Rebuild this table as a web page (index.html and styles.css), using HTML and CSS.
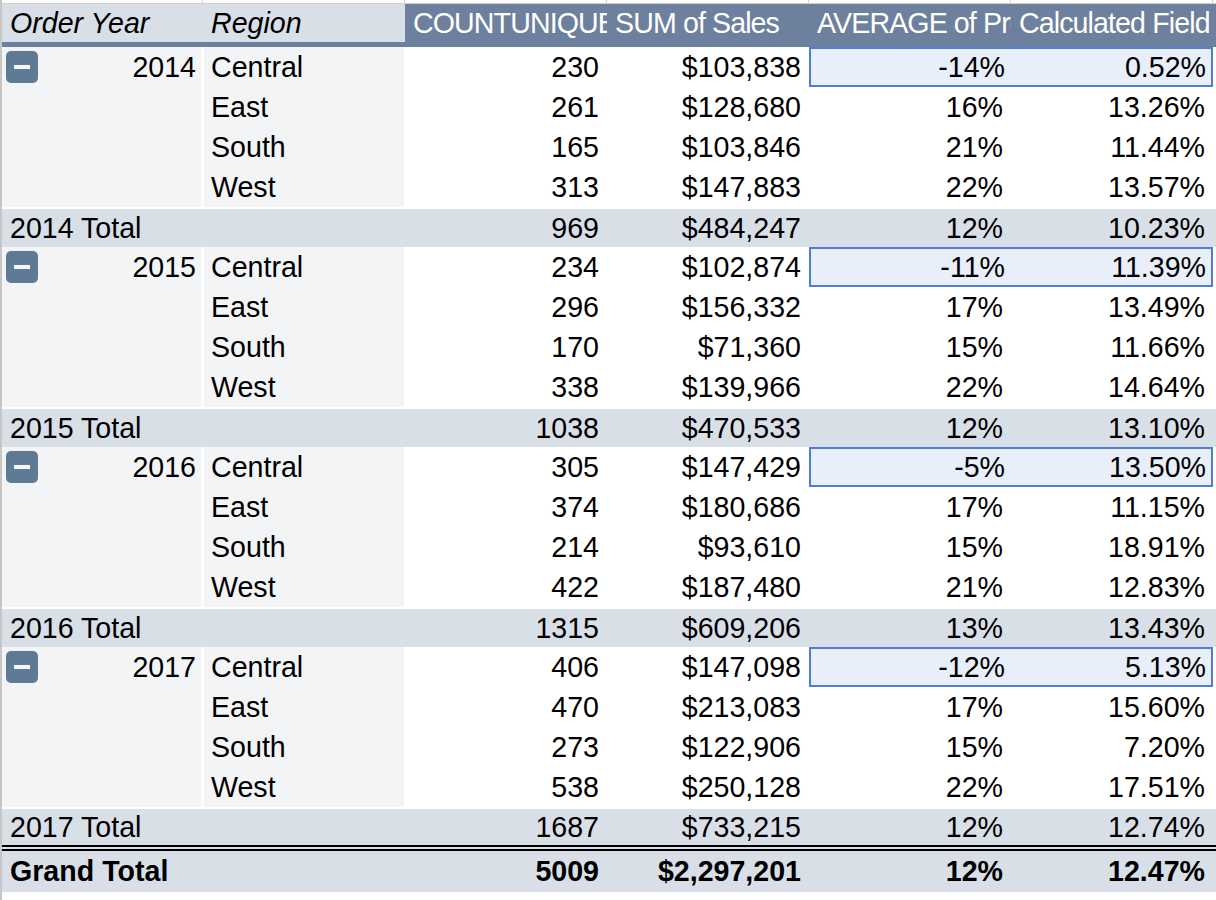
FILE: index.html
```html
<!DOCTYPE html>
<html>
<head>
<meta charset="utf-8">
<link rel="stylesheet" href="styles.css">
</head>
<body>
<div class="sheet">
  <div class="top-strip">
    <span class="t1"></span><span class="t2"></span><span class="t3"></span><span class="t3"></span><span class="t3"></span><span class="t3"></span><span class="tf"></span>
  </div>
  <div class="row hdr">
    <div class="c1 hl-cell">Order Year</div>
    <div class="c2 hl-cell">Region</div>
    <div class="cv hv"><span class="ht">COUNTUNIQUE of Order ID</span></div>
    <div class="cv hv"><span class="ht">SUM of Sales</span></div>
    <div class="cv hv"><span class="ht">AVERAGE of Profit Ratio</span></div>
    <div class="cv hv"><span class="ht">Calculated Field 1</span></div>
    <div class="fill hv"></div>
  </div>

  <div class="row data">
    <div class="c1"><span class="btn"></span><span class="yr">2014</span></div>
    <div class="c2">Central</div>
    <div class="cv num">230</div><div class="cv num">$103,838</div>
    <div class="hl"><div class="cv num">-14%</div><div class="cv num">0.52%</div></div>
  </div>
  <div class="row data"><div class="c1"></div><div class="c2">East</div><div class="cv num">261</div><div class="cv num">$128,680</div><div class="cv num">16%</div><div class="cv num">13.26%</div></div>
  <div class="row data"><div class="c1"></div><div class="c2">South</div><div class="cv num">165</div><div class="cv num">$103,846</div><div class="cv num">21%</div><div class="cv num">11.44%</div></div>
  <div class="row data"><div class="c1"></div><div class="c2">West</div><div class="cv num">313</div><div class="cv num">$147,883</div><div class="cv num">22%</div><div class="cv num">13.57%</div></div>
  <div class="row total"><div class="ct">2014 Total</div><div class="cv num">969</div><div class="cv num">$484,247</div><div class="cv num">12%</div><div class="cv num">10.23%</div></div>

  <div class="row data">
    <div class="c1"><span class="btn"></span><span class="yr">2015</span></div>
    <div class="c2">Central</div>
    <div class="cv num">234</div><div class="cv num">$102,874</div>
    <div class="hl"><div class="cv num">-11%</div><div class="cv num">11.39%</div></div>
  </div>
  <div class="row data"><div class="c1"></div><div class="c2">East</div><div class="cv num">296</div><div class="cv num">$156,332</div><div class="cv num">17%</div><div class="cv num">13.49%</div></div>
  <div class="row data"><div class="c1"></div><div class="c2">South</div><div class="cv num">170</div><div class="cv num">$71,360</div><div class="cv num">15%</div><div class="cv num">11.66%</div></div>
  <div class="row data"><div class="c1"></div><div class="c2">West</div><div class="cv num">338</div><div class="cv num">$139,966</div><div class="cv num">22%</div><div class="cv num">14.64%</div></div>
  <div class="row total"><div class="ct">2015 Total</div><div class="cv num">1038</div><div class="cv num">$470,533</div><div class="cv num">12%</div><div class="cv num">13.10%</div></div>

  <div class="row data">
    <div class="c1"><span class="btn"></span><span class="yr">2016</span></div>
    <div class="c2">Central</div>
    <div class="cv num">305</div><div class="cv num">$147,429</div>
    <div class="hl"><div class="cv num">-5%</div><div class="cv num">13.50%</div></div>
  </div>
  <div class="row data"><div class="c1"></div><div class="c2">East</div><div class="cv num">374</div><div class="cv num">$180,686</div><div class="cv num">17%</div><div class="cv num">11.15%</div></div>
  <div class="row data"><div class="c1"></div><div class="c2">South</div><div class="cv num">214</div><div class="cv num">$93,610</div><div class="cv num">15%</div><div class="cv num">18.91%</div></div>
  <div class="row data"><div class="c1"></div><div class="c2">West</div><div class="cv num">422</div><div class="cv num">$187,480</div><div class="cv num">21%</div><div class="cv num">12.83%</div></div>
  <div class="row total"><div class="ct">2016 Total</div><div class="cv num">1315</div><div class="cv num">$609,206</div><div class="cv num">13%</div><div class="cv num">13.43%</div></div>

  <div class="row data">
    <div class="c1"><span class="btn"></span><span class="yr">2017</span></div>
    <div class="c2">Central</div>
    <div class="cv num">406</div><div class="cv num">$147,098</div>
    <div class="hl"><div class="cv num">-12%</div><div class="cv num">5.13%</div></div>
  </div>
  <div class="row data"><div class="c1"></div><div class="c2">East</div><div class="cv num">470</div><div class="cv num">$213,083</div><div class="cv num">17%</div><div class="cv num">15.60%</div></div>
  <div class="row data"><div class="c1"></div><div class="c2">South</div><div class="cv num">273</div><div class="cv num">$122,906</div><div class="cv num">15%</div><div class="cv num">7.20%</div></div>
  <div class="row data"><div class="c1"></div><div class="c2">West</div><div class="cv num">538</div><div class="cv num">$250,128</div><div class="cv num">22%</div><div class="cv num">17.51%</div></div>
  <div class="row total last"><div class="ct">2017 Total</div><div class="cv num">1687</div><div class="cv num">$733,215</div><div class="cv num">12%</div><div class="cv num">12.74%</div></div>

  <div class="row grand"><div class="ct">Grand Total</div><div class="cv num">5009</div><div class="cv num">$2,297,201</div><div class="cv num">12%</div><div class="cv num">12.47%</div></div>
</div>
</body>
</html>
```
FILE: styles.css
```css
html, body {
  margin: 0;
  padding: 0;
  background: #ffffff;
}
body {
  font-family: "Liberation Sans", Arial, sans-serif;
  font-size: 28.6px;
  color: #000000;
}
.sheet {
  width: 1216px;
  height: 900px;
  box-sizing: border-box;
  border-left: 2px solid #c6c6c6;
  overflow: hidden;
}
.top-strip {
  display: flex;
  height: 4px;
  box-sizing: border-box;
  border-bottom: 1px solid #d2d2d2;
}
.top-strip span {
  box-sizing: border-box;
  border-right: 1px solid #d2d2d2;
}
.top-strip .t1 { width: 201px; }
.top-strip .t2 { width: 202px; }
.top-strip .t3 { width: 202px; }
.top-strip .tf { flex: 1; border-right: none; }

.row {
  display: flex;
  height: 40px;
  line-height: 40px;
  white-space: nowrap;
}
.c1, .c2, .cv, .ct {
  box-sizing: border-box;
  overflow: hidden;
  flex: none;
}
.c1 { width: 201px; }
.c2 { width: 202px; }
.cv { width: 202px; }
.ct { width: 403px; padding-left: 8px; }
.fill { flex: 1; }
.num { text-align: right; padding-right: 8px; }

/* header */
.hdr {
  height: 43px;
  line-height: 38px;
  border-bottom: 5px solid #6d809e;
  box-sizing: border-box;
}
.hdr .hl-cell {
  background: #d9dfe7;
  font-style: italic;
  padding-left: 8px;
}
.hdr .hv {
  background: #6d809e;
  color: #ffffff;
}
.hdr .cv {
  padding-left: 8px;
  overflow: clip;
}
.ht {
  display: block;
  overflow: hidden;
  letter-spacing: -0.9px;
}

/* data rows */
.data .c1 {
  background: #f3f4f6;
  border-right: 2px solid #ffffff;
  display: flex;
  align-items: center;
  padding-left: 4px;
  padding-right: 5px;
}
.data .c2 {
  background: #f3f4f6;
  border-left: 1px solid #ffffff;
  border-right: 1px solid #ffffff;
  padding-left: 7px;
}
.yr { margin-left: auto; }
.btn {
  width: 32px;
  height: 32px;
  border-radius: 5px;
  background: #5e7a94;
  display: flex;
  align-items: center;
  justify-content: center;
}
.btn::after {
  content: "";
  width: 16px;
  height: 4px;
  background: #f3f5f8;
}

/* highlighted pair */
.hl {
  display: flex;
  width: 404px;
  box-sizing: border-box;
  border: 2px solid #4e7ed8;
  background: #e8eefa;
  line-height: 36px;
}
.hl .cv { width: 200px; padding-right: 6px; }
.hl .cv + .cv { padding-right: 5px; }

/* total rows */
.total {
  background: #d9dfe7;
  border-top: 2px solid #ffffff;
  box-sizing: border-box;
  line-height: 38px;
}
.total.last {
  height: 38px;
  line-height: 36px;
}
.grand {
  background: #d9dfe7;
  border-top: 6px double #000000;
  height: 47px;
  line-height: 41px;
  box-sizing: border-box;
  font-weight: bold;
}
```
